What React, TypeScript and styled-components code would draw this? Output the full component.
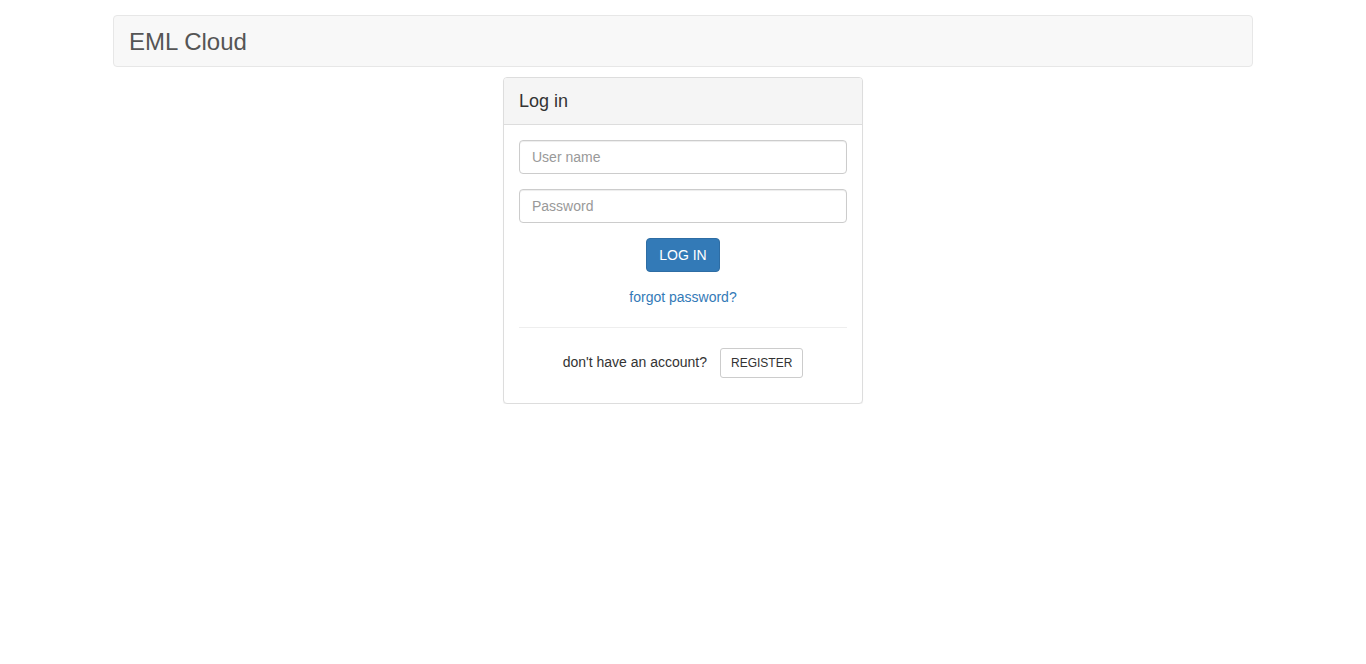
import React from "react";
import styled, { createGlobalStyle } from "styled-components";

const Global = createGlobalStyle`
  * { box-sizing: border-box; }
  body {
    margin: 0;
    font-family: "Liberation Sans", Arial, Helvetica, sans-serif;
    font-size: 14px;
    line-height: 1.42857;
    color: #333;
    background: #fff;
  }
`;

const Page = styled.div`
  width: 1170px;
  margin: 0 auto;
  padding: 15px 15px 0;
  display: flex;
  flex-direction: column;
  align-items: center;
`;

const Navbar = styled.nav`
  width: 100%;
  height: 52px;
  background: #f8f8f8;
  border: 1px solid #e7e7e7;
  border-radius: 4px;
  display: flex;
  align-items: center;
  padding: 2px 15px 0;
`;

const Brand = styled.a`
  font-size: 24px;
  line-height: 24px;
  color: #555;
  text-decoration: none;
`;

const Panel = styled.div`
  width: 360px;
  margin-top: 10px;
  background: #fff;
  border: 1px solid #ddd;
  border-radius: 4px;
  box-shadow: 0 1px 1px rgba(0, 0, 0, 0.05);
`;

const PanelHeading = styled.div`
  height: 47px;
  padding: 2px 15px 0;
  display: flex;
  align-items: center;
  background: #f5f5f5;
  border-bottom: 1px solid #ddd;
  border-radius: 3px 3px 0 0;
  font-size: 18px;
  color: #333;
`;

const PanelBody = styled.form`
  padding: 15px 15px 25px;
  display: flex;
  flex-direction: column;
  align-items: center;
`;

const Input = styled.input`
  width: 100%;
  height: 34px;
  padding: 6px 12px;
  margin-bottom: 15px;
  font-family: inherit;
  font-size: 14px;
  color: #555;
  border: 1px solid #ccc;
  border-radius: 4px;
  box-shadow: inset 0 1px 1px rgba(0, 0, 0, 0.075);
  &::placeholder { color: #999; }
`;

const PrimaryButton = styled.button`
  height: 34px;
  padding: 6px 12px;
  font-family: inherit;
  font-size: 14px;
  color: #fff;
  background: #337ab7;
  border: 1px solid #2e6da4;
  border-radius: 4px;
  text-transform: uppercase;
`;

const Link = styled.a`
  margin-top: 15px;
  line-height: 20px;
  color: #337ab7;
  text-decoration: none;
`;

const Rule = styled.hr`
  width: 100%;
  margin: 20px 0 20px;
  border: 0;
  border-top: 1px solid #eee;
`;

const RegisterRow = styled.div`
  display: flex;
  align-items: center;
  gap: 13px;
  color: #333;
`;

const RowText = styled.span`
  padding-bottom: 1px;
`;

const SmallButton = styled.button`
  height: 30px;
  padding: 5px 10px;
  font-family: inherit;
  font-size: 12px;
  color: #333;
  background: #fff;
  border: 1px solid #ccc;
  border-radius: 3px;
  text-transform: uppercase;
`;

export default function App() {
  return (
    <>
      <Global />
      <Page>
        <Navbar>
          <Brand href="#">EML Cloud</Brand>
        </Navbar>
        <Panel>
          <PanelHeading>Log in</PanelHeading>
          <PanelBody onSubmit={(e) => e.preventDefault()}>
            <Input type="text" placeholder="User name" />
            <Input type="password" placeholder="Password" />
            <PrimaryButton type="submit">Log in</PrimaryButton>
            <Link href="#">forgot password?</Link>
            <Rule />
            <RegisterRow>
              <RowText>don't have an account?</RowText>
              <SmallButton type="button">Register</SmallButton>
            </RegisterRow>
          </PanelBody>
        </Panel>
      </Page>
    </>
  );
}
